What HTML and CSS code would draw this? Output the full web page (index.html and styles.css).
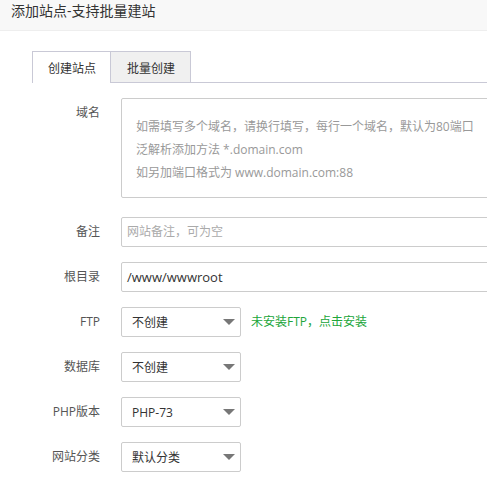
FILE: index.html
```html
<!DOCTYPE html>
<html lang="zh-CN">
<head>
<meta charset="utf-8">
<title>添加站点</title>
<link rel="stylesheet" href="styles.css">
</head>
<body>
<div class="page">
  <div class="header">添加站点-支持批量建站</div>
  <div class="tabs">
    <div class="tab active">创建站点</div>
    <div class="tab">批量创建</div>
  </div>
  <div class="form">
    <div class="row row-area">
      <div class="label">域名</div>
      <div class="area">
        <div class="ph-line">如需填写多个域名，请换行填写，每行一个域名，默认为80端口</div>
        <div class="ph-line">泛解析添加方法 *.domain.com</div>
        <div class="ph-line">如另加端口格式为 www.domain.com:88</div>
      </div>
    </div>
    <div class="row">
      <div class="label">备注</div>
      <div class="input placeholder">网站备注，可为空</div>
    </div>
    <div class="row">
      <div class="label">根目录</div>
      <div class="input">/www/wwwroot</div>
    </div>
    <div class="row">
      <div class="label">FTP</div>
      <div class="select"><span>不创建</span><i class="caret"></i></div>
      <div class="tip">未安装FTP，点击安装</div>
    </div>
    <div class="row">
      <div class="label">数据库</div>
      <div class="select"><span>不创建</span><i class="caret"></i></div>
    </div>
    <div class="row">
      <div class="label">PHP版本</div>
      <div class="select"><span>PHP-73</span><i class="caret"></i></div>
    </div>
    <div class="row">
      <div class="label">网站分类</div>
      <div class="select"><span>默认分类</span><i class="caret"></i></div>
    </div>
  </div>
</div>
</body>
</html>
```
FILE: styles.css
```css
html, body {
  margin: 0;
  padding: 0;
  background: #fff;
  overflow: hidden;
}
body {
  font-family: "Open Sans", "Noto Sans CJK SC", sans-serif;
  font-size: 12px;
  color: #333;
}
.page {
  width: 487px;
  height: 485px;
  overflow: hidden;
}
.header {
  height: 30px;
  line-height: 22px;
  padding-left: 11px;
  font-size: 14px;
  color: #333;
  background: #f8f8f8;
  border-bottom: 1px solid #eee;
}
.tabs {
  display: flex;
  margin-top: 20px;
  margin-left: 32px;
  border-bottom: 1px solid #c9c9d6;
  width: 600px;
}
.tab {
  height: 30px;
  line-height: 33px;
  padding: 0 14px 0 15px;
  border: 1px solid #c9c9d6;
  border-bottom: none;
  background: #f0f0f0;
  color: #333;
  font-size: 12px;
}
.tab + .tab {
  border-left: none;
  padding: 0 15px 0 16px;
}
.tab.active {
  background: #fff;
  height: 31px;
  margin-bottom: -1px;
}
.form {
  padding-top: 15px;
}
.row {
  display: flex;
  align-items: flex-start;
  margin-bottom: 15px;
}
.row-area {
  margin-bottom: 19px;
}
.label {
  width: 100px;
  margin-right: 21px;
  text-align: right;
  line-height: 30px;
  color: #555;
  flex: none;
}
.area {
  box-sizing: border-box;
  width: 400px;
  height: 100px;
  border: 1px solid #ccc;
  border-radius: 2px;
  padding: 16px 14px 0;
  color: #999;
  flex: none;
}
.ph-line {
  line-height: 23px;
  white-space: nowrap;
}
.input {
  box-sizing: border-box;
  width: 400px;
  height: 30px;
  line-height: 28px;
  border: 1px solid #ccc;
  border-radius: 2px;
  padding-left: 5px;
  color: #333;
  font-size: 13px;
  flex: none;
}
.input.placeholder {
  color: #aaa;
  font-size: 12px;
}
.select {
  box-sizing: border-box;
  width: 120px;
  height: 30px;
  border: 1px solid #ccc;
  border-radius: 2px;
  padding: 0 5px 0 10px;
  display: flex;
  align-items: center;
  justify-content: space-between;
  color: #333;
  flex: none;
}
.caret {
  width: 0;
  height: 0;
  border-left: 6px solid transparent;
  border-right: 6px solid transparent;
  border-top: 6px solid #777;
}
.tip {
  margin-left: 10px;
  line-height: 30px;
  color: #20a53a;
}
```
